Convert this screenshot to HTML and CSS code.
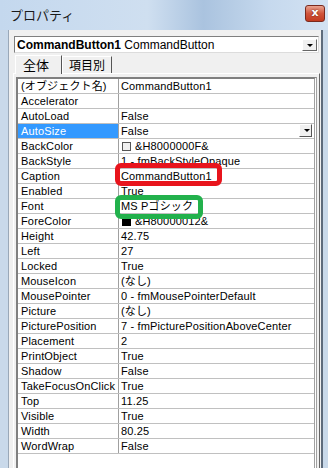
FILE: index.html
```html
<!DOCTYPE html>
<html>
<head>
 <meta charset="UTF-8">
 <title>プロパティ</title>
 <link rel="stylesheet" href="styles.css">
</head>
<body>
<div class="window">
  <div class="titlebar"><span class="title">プロパティ</span><span class="close">x</span></div>
  <div class="frame">
    <div class="client">
      <div class="combo"><span><b>CommandButton1</b> CommandButton</span><span class="drop"></span></div>
      <div class="tabs"><div class="tab on">全体</div><div class="tab">項目別</div></div>
      <div class="page">
        <div class="grid">
          <div class="row"><div class="n">(オブジェクト名)</div><div class="v">CommandButton1</div></div>
          <div class="row"><div class="n">Accelerator</div><div class="v"></div></div>
          <div class="row"><div class="n">AutoLoad</div><div class="v">False</div></div>
          <div class="row sel"><div class="n">AutoSize</div><div class="v">False<span class="btn"></span></div></div>
          <div class="row"><div class="n">BackColor</div><div class="v"><span class="sw"></span>&amp;H8000000F&amp;</div></div>
          <div class="row"><div class="n">BackStyle</div><div class="v">1 - fmBackStyleOpaque</div></div>
          <div class="row"><div class="n">Caption</div><div class="v">CommandButton1</div></div>
          <div class="row"><div class="n">Enabled</div><div class="v">True</div></div>
          <div class="row"><div class="n">Font</div><div class="v">MS Pゴシック</div></div>
          <div class="row"><div class="n">ForeColor</div><div class="v"><span class="sw dark"></span>&amp;H80000012&amp;</div></div>
          <div class="row"><div class="n">Height</div><div class="v">42.75</div></div>
          <div class="row"><div class="n">Left</div><div class="v">27</div></div>
          <div class="row"><div class="n">Locked</div><div class="v">True</div></div>
          <div class="row"><div class="n">MouseIcon</div><div class="v">(なし)</div></div>
          <div class="row"><div class="n">MousePointer</div><div class="v">0 - fmMousePointerDefault</div></div>
          <div class="row"><div class="n">Picture</div><div class="v">(なし)</div></div>
          <div class="row"><div class="n">PicturePosition</div><div class="v">7 - fmPicturePositionAboveCenter</div></div>
          <div class="row"><div class="n">Placement</div><div class="v">2</div></div>
          <div class="row"><div class="n">PrintObject</div><div class="v">True</div></div>
          <div class="row"><div class="n">Shadow</div><div class="v">False</div></div>
          <div class="row"><div class="n">TakeFocusOnClick</div><div class="v">True</div></div>
          <div class="row"><div class="n">Top</div><div class="v">11.25</div></div>
          <div class="row"><div class="n">Visible</div><div class="v">True</div></div>
          <div class="row"><div class="n">Width</div><div class="v">80.25</div></div>
          <div class="row"><div class="n">WordWrap</div><div class="v">False</div></div>
        </div>
      </div>
    </div>
  </div>
  <div class="mark red"></div>
  <div class="mark green"></div>
</div>
</body>
</html>
```

FILE: styles.css
```css
body { margin: 0; background: #fff; font-family: "Liberation Sans", "Noto Sans CJK JP", sans-serif;
  color: #000; }
.window { position: relative; width: 328px; height: 468px; overflow: hidden;
  display: flex; flex-direction: column; background: #c9d9ea; }
.titlebar { height: 30px; flex: none; display: flex; align-items: center;
  justify-content: space-between; padding: 0 3px 0 10px;
  background: linear-gradient(90deg, #c4d8ee 0%, #cfdff0 45%, #aac3df 62%, #b8cee6 72%, #c6d9ee 82%, #d3e2f2 100%); }
.title { font-family: "Noto Sans CJK JP", sans-serif; font-size: 13px; color: #1a1a1a;
  margin-top: -1px; }
.close { width: 20px; height: 17px; margin-top: -4px; border: 1px solid #7a2a1e; border-radius: 3px;
  box-sizing: border-box; background: linear-gradient(#e9a38f, #d1553c 50%, #c23b20);
  color: #fff; font: bold 11px "DejaVu Sans", sans-serif; text-align: center; line-height: 14px;
  text-shadow: 0 0 2px #5a1408; }
.frame { flex: 1; display: flex; padding: 0 5px 0 8px; }
.client { flex: 1; display: flex; flex-direction: column; background: #f0f0f0;
  border-left: 1px solid #9aa8b8; border-right: 2px solid #5d6b7c; padding: 6px 1px 0 4px; }
.combo { height: 17px; margin: 0 1px 0 1px; box-sizing: border-box; background: #fff;
  border: 1px solid #7f7f7f; border-right-color: #dcdcdc; border-bottom-color: #dcdcdc;
  display: flex; align-items: center; justify-content: space-between; padding: 0 1px 0 2px;
  font-size: 12px; }
.drop { width: 15px; height: 12px; box-sizing: border-box; background: #f0f0f0;
  border: 1px solid #fff; border-right-color: #666; border-bottom-color: #666;
  position: relative; }
.drop::after, .btn::after { content: ""; position: absolute; left: 4px; top: 4px;
  border: 3px solid transparent; border-top: 3px solid #000; border-bottom: 0; }
.tabs { display: flex; align-items: flex-end; height: 18px; margin: 2px 0 0 2px; }
.tab { font-family: "Noto Sans CJK JP", sans-serif; font-size: 12px; line-height: 15px;
  padding: 0 6px; border: 1px solid #fff; border-right-color: #555; border-bottom: 0;
  height: 16px; }
.tab.on { height: 18px; padding: 0 12px 0 7px; background: #f0f0f0; position: relative;
  font-size: 13px; line-height: 17px; margin-bottom: -1px; z-index: 1; }
.page { flex: 1; border: 1px solid #fff; border-right-color: #666; border-bottom: 0;
  padding: 3px 2px 0 2px; }
.grid { height: 100%; box-sizing: border-box; background: #fff;
  border-top: 2px solid #808080; border-left: 2px solid #808080;
  border-right: 3px double #a0a0a0; }
.row { display: flex; height: 15px; box-sizing: border-box; border-bottom: 1px solid #c0c0c0;
  font-size: 11px; letter-spacing: 0.15px; line-height: 14px; }
.n { width: 101px; flex: none; box-sizing: border-box; padding-left: 3px;
  border-right: 1px solid #a0a0a0; white-space: nowrap; overflow: hidden; }
.v { flex: 1; padding-left: 2px; white-space: nowrap; overflow: hidden; position: relative;
  display: flex; align-items: center; }
.sel .n { background: #3399ff; color: #fff; }
.btn { position: absolute; right: 2px; top: 0; width: 13px; height: 13px; box-sizing: border-box;
  background: #f0f0f0; border: 1px solid #fff; border-right-color: #555; border-bottom-color: #555; }
.sw { width: 9px; height: 9px; box-sizing: border-box; border: 1px solid #555; background: #f0f0f0;
  margin: 0 4px 0 1px; }
.sw.dark { background: #000; border-color: #000; }
.mark { position: absolute; box-sizing: border-box; border-radius: 6px; }
.red { left: 115px; top: 163px; width: 107px; height: 23px; border: 5px solid #e8141c; }
.green { left: 115px; top: 195px; width: 88px; height: 24px; border: 5px solid #22b14c; }
```
